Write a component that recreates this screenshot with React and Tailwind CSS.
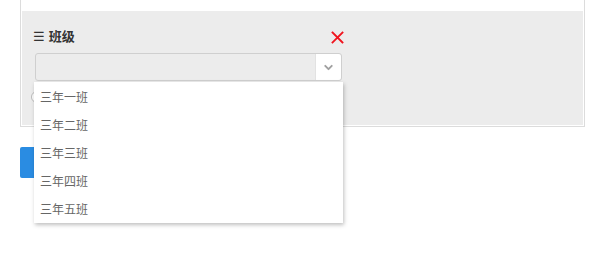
import { ChevronDown } from 'lucide-react';

const classes = ["三年一班", "三年二班", "三年三班", "三年四班", "三年五班"];

export default function App() {
  return (
    <div className="relative w-[600px] h-[268px] bg-white overflow-hidden font-['Liberation_Sans','Noto_Sans_CJK_SC',sans-serif]">
      {/* Card */}
      <div className="ml-[20px] w-[565px] h-[127px] border border-t-0 border-[#dcdcdc] pt-[11px] px-[1px]">
        <div className="h-[114px] bg-[#ececec] pl-[12px] pt-[16px]">
          <div className="-ml-[1px] w-[311px] flex items-center justify-between h-[18px]">
            <span className="text-[13px] text-[#333] leading-none">
              <span className="font-normal">☰</span> <span className="font-semibold">班级</span>
            </span>
            <svg width="13" height="13" viewBox="0 0 13 13" className="mt-[2px]">
              <path d="M1.5 1.5 L11.5 11.5 M11.5 1.5 L1.5 11.5" stroke="#f0141e" strokeWidth="1.8" strokeLinecap="square" />
            </svg>
          </div>
          <div className="mt-[8px] ml-[1px] w-[307px] h-[28px] border border-[#cfcfcf] rounded-[3px] flex justify-end">
            <div className="w-[26px] h-full bg-white rounded-r-[3px] border-l border-[#e2e2e2] flex items-center justify-center">
              <ChevronDown className="size-[13px] text-[#a0a0a0]" strokeWidth={3.5} />
            </div>
          </div>
          <div className="mt-[10px] size-[12px] rounded-full border border-[#bbb] bg-white -ml-[3px]"></div>
        </div>
      </div>

      {/* Button */}
      <div className="ml-[20px] mt-[20px] w-[80px] h-[31px] bg-[#2a8ce2] rounded-[2px]"></div>

      {/* Dropdown */}
      <div className="absolute left-[34px] top-[82px] w-[309px] h-[141px] pt-[2px] bg-white shadow-[1px_2px_4px_rgba(0,0,0,0.25)]">
        {classes.map((c) => (
          <div key={c} className="h-[28px] pl-[6px] flex items-center text-[12px] text-[#666]">
            {c}
          </div>
        ))}
      </div>
    </div>
  );
}
